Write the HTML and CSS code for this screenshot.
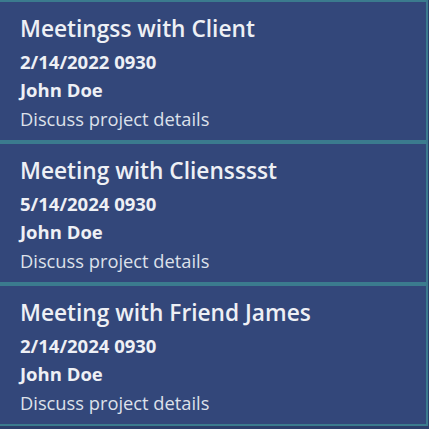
FILE: index.html
```html
<!DOCTYPE html>
<html>
<head>
<meta charset="utf-8">
<link rel="stylesheet" href="styles.css">
</head>
<body>
<div class="list">
  <div class="card">
    <div class="title">Meetingss with Client</div>
    <div class="date">2/14/2022 0930</div>
    <div class="name">John Doe</div>
    <div class="desc">Discuss project details</div>
  </div>
  <div class="card">
    <div class="title">Meeting with Cliensssst</div>
    <div class="date">5/14/2024 0930</div>
    <div class="name">John Doe</div>
    <div class="desc">Discuss project details</div>
  </div>
  <div class="card">
    <div class="title">Meeting with Friend James</div>
    <div class="date">2/14/2024 0930</div>
    <div class="name">John Doe</div>
    <div class="desc">Discuss project details</div>
  </div>
</div>
</body>
</html>
```

FILE: styles.css
```css
html, body {
  margin: 0;
  padding: 0;
  background: #2c3f6b;
  font-family: "Open Sans", sans-serif;
}
.list {
  width: 429px;
  height: 429px;
  overflow: hidden;
}
.card {
  box-sizing: border-box;
  height: 142px;
  width: 428px;
  background: #33477a;
  border: 2px solid #3b7b8e;
  border-left: 0;
  padding: 10px 20px 0 20px;
  color: #eef0f5;
  display: flex;
  flex-direction: column;
}
.title {
  font-size: 22.7px;
  font-weight: 600;
  line-height: 34px;
}
.date, .name {
  font-size: 18.5px;
  font-weight: 700;
  line-height: 28px;
}
.date {
  margin-top: 1px;
  line-height: 29px;
}
.desc {
  margin-top: 1px;
  font-size: 18.3px;
  font-weight: 400;
  line-height: 28px;
  color: #dde1ea;
}
```
